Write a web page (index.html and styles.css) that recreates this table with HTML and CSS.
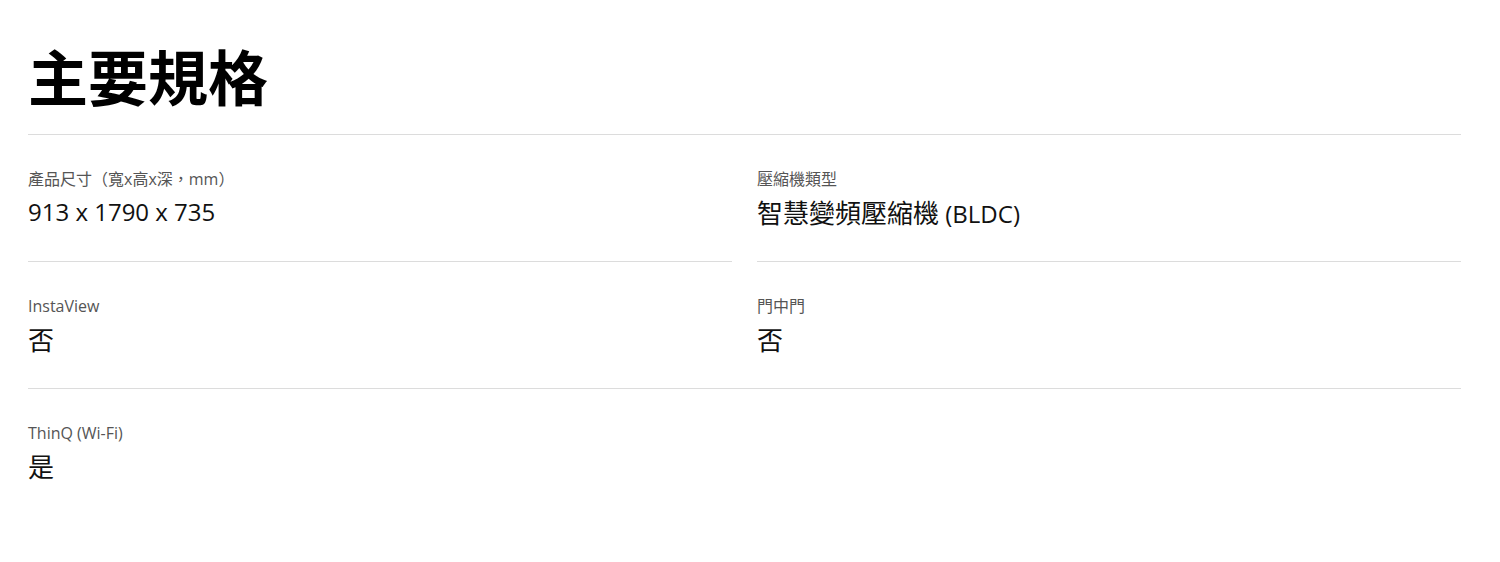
FILE: index.html
```html
<!DOCTYPE html>
<html lang="zh-Hant">
<head>
<meta charset="utf-8">
<title>主要規格</title>
<link rel="stylesheet" href="styles.css">
</head>
<body>
<section class="specs">
  <h2 class="specs-title">主要規格</h2>
  <div class="spec-row spec-row--split">
    <div class="spec-item">
      <div class="spec-label">產品尺寸（寬x高x深，mm）</div>
      <div class="spec-value">913 x 1790 x 735</div>
    </div>
    <div class="spec-item">
      <div class="spec-label">壓縮機類型</div>
      <div class="spec-value"><span class="cjk">智慧變頻壓縮機</span> (BLDC)</div>
    </div>
  </div>
  <div class="spec-row spec-row--full">
    <div class="spec-item">
      <div class="spec-label">InstaView</div>
      <div class="spec-value"><span class="cjk">否</span></div>
    </div>
    <div class="spec-item">
      <div class="spec-label">門中門</div>
      <div class="spec-value"><span class="cjk">否</span></div>
    </div>
  </div>
  <div class="spec-row">
    <div class="spec-item">
      <div class="spec-label">ThinQ (Wi-Fi)</div>
      <div class="spec-value"><span class="cjk">是</span></div>
    </div>
  </div>
</section>
</body>
</html>
```

FILE: styles.css
```css
html, body {
  margin: 0;
  padding: 0;
  background: #fff;
}

body {
  font-family: "Open Sans", "Noto Sans CJK TC", sans-serif;
  color: #111;
}

.specs {
  margin: 0 39px 0 28px;
}

.specs-title {
  margin: 0;
  padding: 30px 0 14px;
  font-family: "Noto Sans CJK TC", sans-serif;
  font-size: 60px;
  font-weight: 700;
  line-height: 90px;
  color: #000;
  border-bottom: 1px solid #dcdcdc;
}

.spec-row {
  display: grid;
  grid-template-columns: 1fr 1fr;
  column-gap: 25px;
}

.spec-row--full {
  border-bottom: 1px solid #dcdcdc;
}

.spec-item {
  padding: 34px 0 33px;
}

.spec-row--split .spec-item {
  border-bottom: 1px solid #dcdcdc;
}

.spec-label {
  font-family: "Open Sans", "Noto Sans CJK TC", sans-serif;
  font-size: 16px;
  line-height: 20px;
  color: #555;
}

.spec-value {
  margin-top: 7px;
  font-family: "Open Sans", "Noto Sans CJK TC", sans-serif;
  font-size: 24px;
  line-height: 32px;
  height: 32px;
  color: #111;
}

.spec-value .cjk {
  font-family: "Noto Sans CJK TC", sans-serif;
  font-size: 26px;
  line-height: 32px;
}
```
